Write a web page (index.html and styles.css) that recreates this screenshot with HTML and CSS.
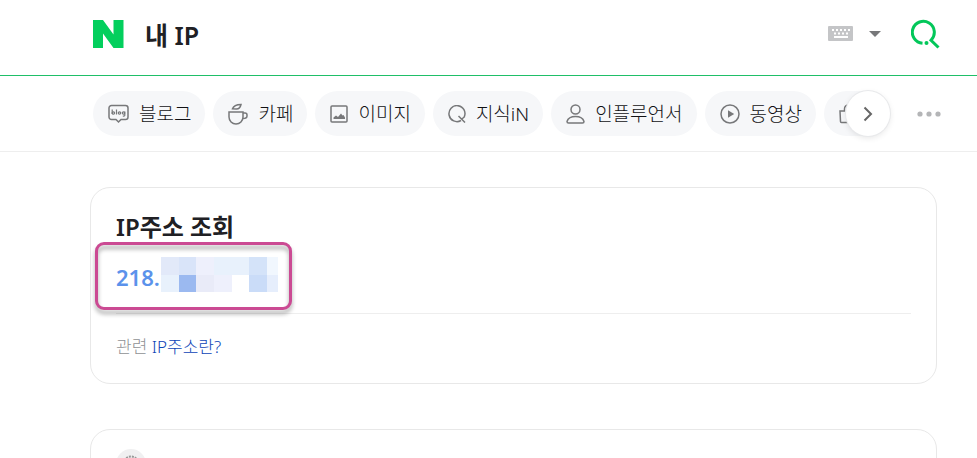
FILE: index.html
```
<!DOCTYPE html>
<html lang="ko">
<head>
    <meta charset="UTF-8">
    <meta name="viewport" content="width=device-width, initial-scale=1.0">
    <title>내 IP : 검색</title>
    <link rel="stylesheet" href="styles.css">
</head>
<body>
    <header class="header">
        <a class="logo" href="#" aria-label="홈">
            <svg width="31" height="28" viewBox="0 0 31 28"><path fill="#03cf5d" d="M0 0h10l10.500 14.500V0h10v28H20.500L10 13.500V28H0z"/></svg>
        </a>
        <form class="search" onsubmit="return false">
            <input class="search-input" type="text" value="내 IP" aria-label="검색어">
            <button class="btn-keyboard" type="button" aria-label="한글 입력기">
                <svg width="25" height="15" viewBox="0 0 25 15">
                    <rect width="25" height="15" rx="1" fill="#c4c5c7"/>
                    <path stroke="#fff" stroke-width="2" stroke-dasharray="2 2" d="M4 4h18M6 7.500h14"/>
                    <path stroke="#fff" stroke-width="2" d="M6 11h14"/>
                </svg>
            </button>
            <button class="btn-arrow" type="button" aria-label="자동완성 펼치기">
                <svg width="12" height="6" viewBox="0 0 12 6"><path fill="#77787a" d="M0 0h12L6 6z"/></svg>
            </button>
            <button class="btn-search" type="submit" aria-label="검색">
                <svg width="30" height="30" viewBox="0 0 30 30" fill="none" stroke="#03c75a" stroke-width="3">
                    <path d="M11.500 24.300A11 11 0 1 1 20 21.200L27.500 28.500"/>
                    <circle cx="15.500" cy="24" r="2" fill="#03c75a" stroke="none"/>
                </svg>
            </button>
        </form>
    </header>

    <nav class="nav">
        <div class="tabs-wrap">
            <div class="tabs">
                <a class="tab" href="#">
                    <svg width="21" height="20" viewBox="0 0 21 20" fill="none" stroke="#77787a" stroke-width="1.500">
                        <path d="M3.500 1.500h14a2.500 2.500 0 0 1 2.500 2.500v9a2.500 2.500 0 0 1-2.500 2.500H13L10.500 18 8 15.500H3.500A2.500 2.500 0 0 1 1 13V4a2.500 2.500 0 0 1 2.500-2.500z"/>
                        <path stroke-width="1.200" d="M4.200 5.500v4.500M8.500 5.500v5M16.800 7.500v3.800q0 1-2 .7"/>
                        <g stroke-width="1.200"><circle cx="5.400" cy="9" r="1.200"/><circle cx="11.500" cy="9" r="1.200"/><circle cx="15.500" cy="9" r="1.200"/></g>
                    </svg>
                    블로그
                </a>
                <a class="tab" href="#">
                    <svg width="20" height="22" viewBox="0 0 20 22" fill="none" stroke="#77787a" stroke-width="1.500">
                        <path d="M1 9h14v5a7 7 0 0 1-14 0zM15 10h2q2 0 2 2v1q0 2.500-4 2.500M4.500 5.800Q6 1.500 13 1.500 12 6 8.500 6z"/>
                    </svg>
                    카페
                </a>
                <a class="tab" href="#">
                    <svg width="18" height="18" viewBox="0 0 18 18">
                        <rect x="1" y="1" width="16" height="16" rx="1" fill="none" stroke="#77787a" stroke-width="1.500"/>
                        <path fill="#77787a" d="M3.500 14v-1.500l2.500-2 2 1.500 3-3.500 1.500 2 1-.5 1.500 2.500V14z"/>
                    </svg>
                    이미지
                </a>
                <a class="tab" href="#">
                    <svg width="18" height="18" viewBox="0 0 18 18" fill="none" stroke="#77787a" stroke-width="1.500">
                        <path d="M13 15.500A8 8 0 1 1 16.200 12M10.500 11l6.500 6.500M16.800 11.500l-3.500 3"/>
                    </svg>
                    지식iN
                </a>
                <a class="tab" href="#">
                    <svg width="19" height="20" viewBox="0 0 19 20" fill="none" stroke="#77787a" stroke-width="1.500">
                        <circle cx="9.500" cy="5.500" r="4.500"/>
                        <path d="M1 17.500q1.500-5 8.500-5t8.500 5q0 1.500-1.500 1.500h-14Q1 19 1 17.500z"/>
                    </svg>
                    인플루언서
                </a>
                <a class="tab" href="#">
                    <svg width="20" height="20" viewBox="0 0 20 20">
                        <circle cx="10" cy="10" r="9" fill="none" stroke="#77787a" stroke-width="1.500"/>
                        <path fill="#77787a" d="M8 6.200l6.200 3.800L8 13.800z"/>
                    </svg>
                    동영상
                </a>
                <a class="tab tab-last" href="#" aria-label="쇼핑">
                    <svg width="20" height="20" viewBox="0 0 20 20" fill="none" stroke="#77787a" stroke-width="1.500">
                        <path d="M1 7h4.500V5q0-4 4.500-4t4.500 4v2H19l-1 11.500H2.500q-1 0-1-1z"/>
                    </svg>
                </a>
            </div>
            <button class="btn-next" type="button" aria-label="다음">
                <svg width="10" height="16" viewBox="0 0 10 16" fill="none" stroke="#666" stroke-width="2"><path d="M1.500 1.500L8 8l-6.500 6.500"/></svg>
            </button>
        </div>
        <button class="btn-more" type="button" aria-label="더보기">
            <svg width="24" height="6" viewBox="0 0 24 6" fill="#b4b5b7"><circle cx="3" cy="3" r="2.600"/><circle cx="12" cy="3" r="2.600"/><circle cx="21" cy="3" r="2.600"/></svg>
        </button>
    </nav>

    <main class="content">
        <section class="card">
            <h2 class="card-title">IP주소 조회</h2>
            <div class="ip">
                <span>218.</span>
                <div class="mosaic">
                    <i class="c1"></i><i class="c2"></i><i class="c3"></i><i class="c4"></i><i class="c4"></i><i class="c5"></i><i class="c6"></i>
                    <i class="c4"></i><i class="c7"></i><i class="c8"></i><i class="c3"></i><i></i><i class="c9"></i><i class="c10"></i>
                </div>
                <div class="highlight"></div>
            </div>
            <p class="related">관련 <a href="#">IP주소란?</a></p>
        </section>
        <section class="card">
            <div class="source">
                <svg width="18" height="18" viewBox="0 0 18 18" fill="none" stroke="#999"><circle cx="9" cy="9" r="7.500" stroke-width="2" stroke-dasharray="2 1"/><circle cx="9" cy="9" r="4"/></svg>
            </div>
        </section>
    </main>
</body>
</html>
```
FILE: styles.css
```
* {
    box-sizing: border-box;
}
/* no visible scrollbar */
html {
    scrollbar-width: none;
}
body {
    margin: 0;
    overflow-x: hidden;
    background: #fff;
    color: #202024;
    font-family: "Noto Sans", "Noto Sans CJK KR", sans-serif;
}
a {
    text-decoration: none;
}
svg {
    display: block;
    flex: none;
}
button {
    display: flex;
    align-items: center;
    justify-content: center;
    padding: 0;
    border: none;
    background: none;
    cursor: pointer;
}
.header {
    display: flex;
    align-items: center;
    height: 76px;
    padding: 0 36px 8px 93px;
    border-bottom: 1px solid #1fbf68;
}
.search {
    display: flex;
    flex: 1;
    align-items: center;
    margin-left: 21px;
}
.search-input {
    flex: 1;
    min-width: 0;
    height: 40px;
    padding: 0;
    border: none;
    outline: none;
    color: #202024;
    font-family: inherit;
    font-size: 25px;
    font-weight: 600;
}
.btn-arrow {
    margin: 0 30px 0 16px;
}
.nav {
    display: flex;
    align-items: center;
    height: 76px;
    padding: 0 36px 0 93px;
    border-bottom: 1px solid #eee;
}
.tabs-wrap {
    position: relative;
    flex: 1;
    min-width: 0;
}
.tabs {
    display: flex;
    gap: 8px;
    margin-right: 22px;
    overflow: hidden;
}
.tab {
    display: flex;
    flex: none;
    align-items: center;
    gap: 10px;
    height: 45px;
    padding: 0 14px 0 15px;
    border-radius: 23px;
    background: #f6f7f9;
    color: #111114;
    font-size: 19px;
    font-weight: 300;
    line-height: 24px;
}
.tab-last {
    width: 96px;
}
.btn-next {
    position: absolute;
    top: 0;
    right: 0;
    width: 44px;
    height: 45px;
    border-radius: 50%;
    background: #fff;
    box-shadow: 0 0 0 1px #e8e9eb, 0 2px 6px rgba(0, 0, 0, 0.1);
}
.btn-more {
    margin-left: 27px;
}
.content {
    display: grid;
    gap: 45px;
    padding: 35px 40px 0 90px;
}
.card {
    padding: 23px 25px 24px;
    border: 1px solid #e8e8e8;
    border-radius: 20px;
}
.card-title {
    margin: 0;
    font-size: 24px;
    font-weight: 600;
    line-height: 32px;
}
.ip {
    position: relative;
    display: flex;
    align-items: center;
    gap: 1px;
    height: 71px;
    padding-bottom: 7px;
    border-bottom: 1px solid #eee;
    color: #5b92eb;
    font-size: 22px;
    font-weight: 600;
}
.ip span {
    padding-top: 4px;
}
.mosaic {
    display: grid;
    grid-template-columns: 18px 17px 18px 18px 17px 18px 11px;
    grid-template-rows: 18px 17px;
}
.c1 { background: #e2e9f9; }
.c2 { background: #d9e4f9; }
.c3 { background: #eef0fc; }
.c4 { background: #e8f1fc; }
.c5 { background: #d4e3f9; }
.c6 { background: #f1f7fe; }
.c7 { background: #9bb9f0; }
.c8 { background: #e9ebf8; }
.c9 { background: #cadcf8; }
.c10 { background: #e6eefc; }
.highlight {
    position: absolute;
    top: -1px;
    left: -21px;
    width: 197px;
    height: 68px;
    border: 3px solid #cb4a93;
    border-radius: 9px;
    filter: drop-shadow(0 4px 2px rgba(0, 0, 0, 0.35));
}
.related {
    margin: 21px 0 0;
    color: #8f9194;
    font-size: 17px;
    font-weight: 300;
    line-height: 24px;
}
.related a {
    color: #0c43b7;
}
.source {
    display: flex;
    align-items: center;
    justify-content: center;
    width: 30px;
    height: 30px;
    margin-top: -4px;
    border-radius: 50%;
    background: #f0f0f1;
}
```
